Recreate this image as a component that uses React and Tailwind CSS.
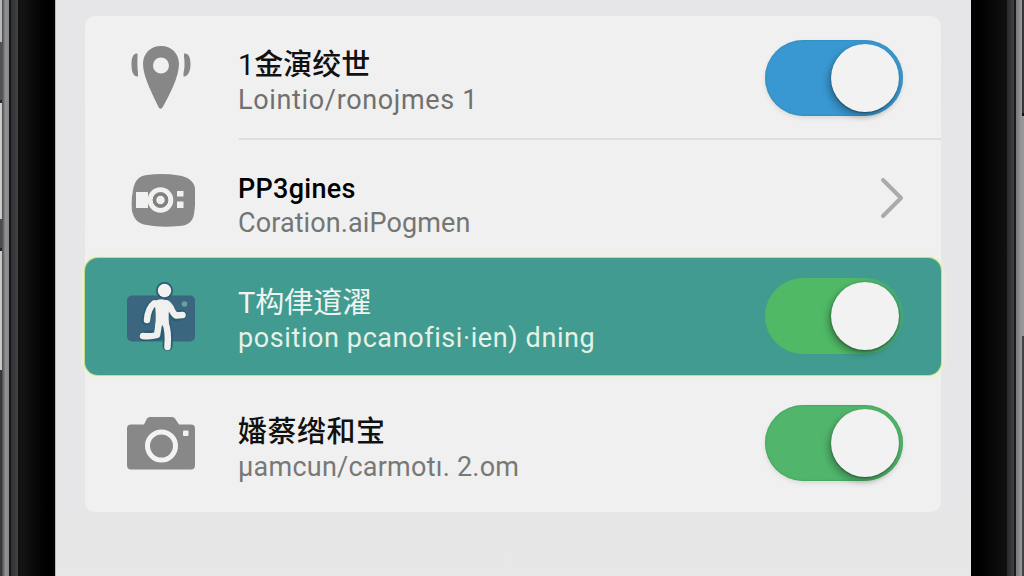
import React from "react";

function PinIcon() {
  return (
    <svg viewBox="0 0 68 72" className="h-[72px] w-[68px]" fill="#878787">
      <path fillRule="evenodd" d="M34 4C23.500 4 16 11.500 16 22c0 13 10.500 32 16 44 1 1 2.200 1 3.200 0C42.500 53 52 35 52 22 52 11.500 44.500 4 34 4Zm0 11.500a8 8 0 1 1 0 16 8 8 0 0 1 0-16Z" />
      <path d="M10.500 11.500C6 10.500 4.500 16 4.500 22.500S6 35 11 34.500v-3.500c-.7-5-.7-11-.5-16.500ZM57 11.500C62 11 63.500 16 63.500 22.500S61 35 56.500 34.500V31c1.300-5 1.300-11 .5-16.500Z" />
    </svg>
  );
}

function ProjectorIcon() {
  return (
    <svg viewBox="0 0 68 56" className="h-[56px] w-[68px]">
      <path fill="#888988" d="M20 3Q36 1 52 3.500C60 4.500 67 9 68 16q1 13-1 26c-1 8-7 12-15 12-11 1-22 1-32-1C11 52 7 47 5 39Q4 28 6 18C8 8 12 4 20 3Z" />
      <path fill="#f1f1f0" d="M9 20h12v16H9z" />
      <circle cx="33.500" cy="28" r="10.300" fill="none" stroke="#f1f1f0" strokeWidth="5" />
      <circle cx="33.500" cy="28" r="6" fill="#efefee" stroke="#808180" strokeWidth="3.500" />
      <path fill="#f1f1f0" d="M50 19h6.500v5.500H50zM50 29.500h6.500V36H50z" />
    </svg>
  );
}

function RunnerIcon() {
  return (
    <svg viewBox="0 0 68 72" className="h-[72px] w-[68px]">
      <rect x="0" y="15.500" width="68" height="46" rx="5" fill="#3c6680" />
      <g fill="none" stroke="#285e76" strokeLinecap="round" strokeLinejoin="round">
        <circle cx="37.500" cy="10.500" r="7" fill="#285e76" strokeWidth="3" />
        <path strokeWidth="10" d="M28 24Q21 28 19.500 40M38 24c5 3 5 9 10 12l7-1M34 43l-2 12-15 1M37 43q5 6 3.500 23" />
      </g>
      <path fill="#f0f0ef" d="M27 21q9-4 16 1-2 12-1 22l-14 3q2-13-1-26Z" />
      <g fill="none" stroke="#f0f0ef" strokeWidth="6.500" strokeLinecap="round" strokeLinejoin="round">
        <path d="M27 23.500Q21 28 20 40M40 23.500c5 3 4 9 9 12l6.500-.5M32 43l-2 12q-7 2-14 1M38 42q4 9 2.500 25" />
      </g>
      <circle cx="37.500" cy="10.500" r="6.700" fill="#f3f2f1" />
      <circle cx="57.500" cy="24" r="2.800" fill="#68a39b" />
    </svg>
  );
}

function CameraIcon() {
  return (
    <svg viewBox="0 0 68 56" className="h-[56px] w-[68px]">
      <path fill="#878887" d="M4 9.500h13l3-6Q21 2 23 2h22q2 0 3 1.500l4 6h12q4 0 4 4V50q0 4.500-4 4.500H4Q0 54.500 0 50V13.500q0-4 4-4Z" />
      <circle cx="34.500" cy="31" r="14" fill="none" stroke="#f3f3f1" strokeWidth="5" />
      <rect x="56" y="15.500" width="5.500" height="5.500" rx="1" fill="#f3f3f1" />
    </svg>
  );
}

function Toggle({ track, thumb }) {
  return (
    <div className={`flex h-[76px] w-[138px] shrink-0 items-center justify-end rounded-full ${track}`}>
      <div className={`mr-[4px] size-[68px] rounded-full bg-[#f2f2f2] ${thumb}`} />
    </div>
  );
}

function Row({ className, icon, textClass, title, titleClass, sub, subClass, children }) {
  return (
    <div className={`flex shrink-0 items-start ${className}`}>
      <div className="ml-[42px] flex h-[76px] w-[68px] shrink-0 items-center justify-center">{icon}</div>
      <div className={`ml-[43px] flex flex-1 flex-col whitespace-nowrap ${textClass}`}>
        <div className={`h-9 leading-9 ${titleClass}`}>{title}</div>
        <div className={`h-9 leading-9 ${subClass}`}>{sub}</div>
      </div>
      {children}
    </div>
  );
}

function LeftFrame() {
  return (
    <div className="flex w-[55px] shrink-0">
      <div className="flex w-[2px] flex-col">
        <div className="h-[42px] bg-[#b3b9b6]" />
        <div className="h-[58px] bg-[#515155]" />
        <div className="h-[3px] bg-[#252525]" />
        <div className="h-[116px] bg-[#cbcbc9]" />
        <div className="h-[29px] bg-[#4b4b4e]" />
        <div className="h-[3px] bg-[#222222]" />
        <div className="h-[119px] bg-[#c9c9c6]" />
        <div className="flex-1 bg-[#373739]" />
      </div>
      <div className="w-[7px] bg-linear-to-r from-[#4b4b4d] via-[#929295] to-[#88888b]" />
      <div className="w-[2px] bg-[#171719]" />
      <div className="w-[7px] bg-linear-to-r from-[#303134] to-[#424346]" />
      <div className="w-[2px] bg-[#111112]" />
      <div className="flex-1 bg-linear-to-r from-[#151515] via-[#070707] to-black" />
    </div>
  );
}

function RightFrame() {
  return (
    <div className="flex w-[53px] shrink-0">
      <div className="flex-1 bg-linear-to-r from-black via-[#060606] to-[#111111]" />
      <div className="w-[7px] bg-linear-to-r from-[#29292b] to-[#414144]" />
      <div className="w-[2px] bg-[#19191b]" />
      <div className="w-[6px] bg-linear-to-r from-[#77777a] to-[#9a9a9d]" />
      <div className="flex w-[2px] flex-col">
        <div className="h-[113px] bg-[#353537]" />
        <div className="h-[3px] bg-[#111111]" />
        <div className="h-[220px] bg-[#979799]" />
        <div className="flex-1 bg-[#414144]" />
      </div>
    </div>
  );
}

const cjk = "font-['Roboto','Noto_Sans_CJK_SC',sans-serif] text-[29px]";
const latin = "font-['Roboto',sans-serif] text-[27px]";

export default function App() {
  return (
    <div className="flex h-[576px] w-[1024px] overflow-hidden bg-[#e7e7e8]">
      <LeftFrame />
      <main className="flex flex-1 border-l border-[#b9b9ba] bg-linear-to-b from-[#e6e6e9] to-[#e7e7e8] pt-4 pr-[30px] pl-[29px]">
        <div className="flex h-[496px] w-[856px] flex-col rounded-[10px] bg-[#f0f0f0]">
          <Row
            className="h-[122px] pt-[24px]"
            icon={<PinIcon />}
            textClass="pt-[7px]"
            title={<><span className="font-normal">1</span>金演绞世</>}
            titleClass={`${cjk} font-medium text-[#111111]`}
            sub="Lointio/ronojmes 1"
            subClass={`${latin} -mt-px tracking-[0.66px] text-[#6f706f]`}
          >
            <Toggle track="mr-[38px] bg-[#3998d1] shadow-[0_2px_4px_#d9d9d9,inset_0_0_2px_#347c9c]" thumb="shadow-[-3px_4px_7px_#0004,0_1px_2px_#0006]" />
          </Row>
          <div className="ml-[154px] h-[2px] shrink-0 bg-[#dededf]" />
          <Row
            className="h-[118px] pt-[22px]"
            icon={<ProjectorIcon />}
            textClass="pt-[9px]"
            title="PP3gines"
            titleClass="font-['Roboto',sans-serif] text-[27px] font-medium tracking-[0.3px] text-black"
            sub="Coration.aiPogmen"
            subClass={`${latin} -mt-[2px] tracking-[0.1px] text-[#747674]`}
          >
            <svg viewBox="0 0 26 44" className="mt-[14px] mr-[36px] h-[44px] w-[26px]" fill="none" stroke="#aaaaaa" strokeWidth="4" strokeLinecap="round" strokeLinejoin="round">
              <path d="M4 4l18 18L4 40" />
            </svg>
          </Row>
          <Row
            className="h-[117px] rounded-[13px] bg-[#429b90] pt-[20px] shadow-[0_0_0_1px_#c4dd82,0_0_4px_2px_#edf2cd]"
            icon={<RunnerIcon />}
            textClass="pt-[7px]"
            title="T构侓逳濯"
            titleClass={`${cjk} text-[#eef5f0]`}
            sub="position pcanofisi·ien) dning"
            subClass={`${latin} -mt-px tracking-[0.6px] text-[#e5f2e5]`}
          >
            <Toggle track="mr-[38px] bg-linear-to-r from-[#50b965] from-60% to-[#46a973]" thumb="shadow-[-3px_4px_7px_#0004,0_1px_3px_#0006]" />
          </Row>
          <Row
            className="h-[137px] pt-[30px]"
            icon={<CameraIcon />}
            textClass="pt-[9px]"
            title="嬏蔡绺和宝"
            titleClass={`${cjk} font-medium tracking-[0.5px] text-[#111111]`}
            sub="μamcun/carmotı. 2.om"
            subClass={`${latin} -mt-px tracking-[0.24px] text-[#777977]`}
          >
            <Toggle track="mr-[38px] bg-[#51b66c] shadow-[0_2px_4px_#d9d9d9,inset_0_0_2px_#348a4b]" thumb="shadow-[-3px_4px_7px_#0004,0_1px_2px_#0006]" />
          </Row>
        </div>
      </main>
      <RightFrame />
    </div>
  );
}
